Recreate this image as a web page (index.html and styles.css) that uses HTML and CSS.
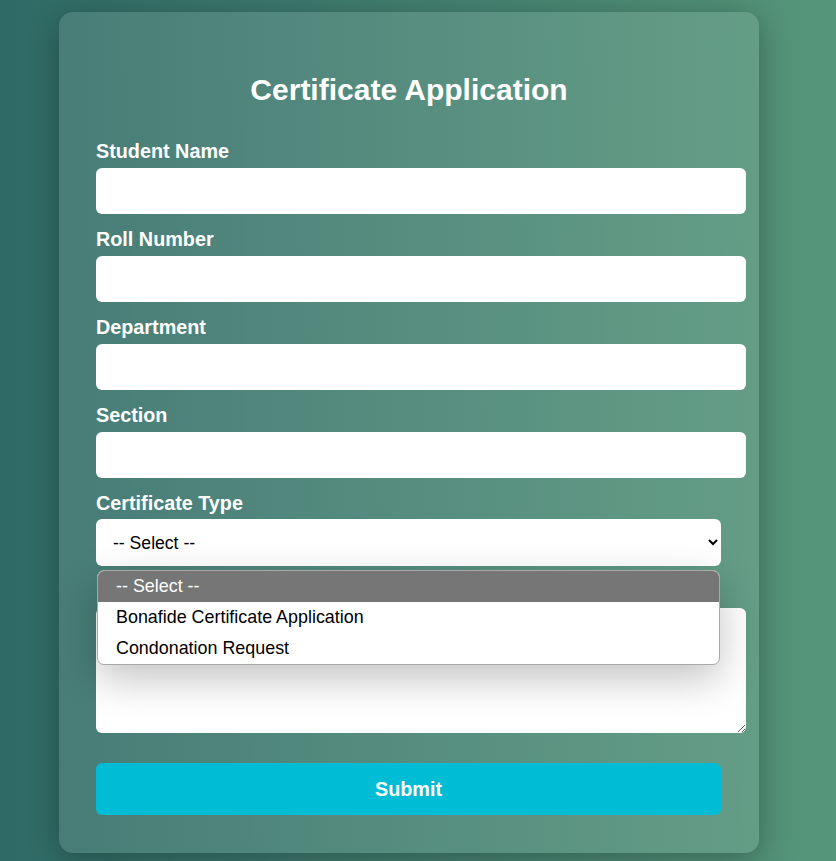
FILE: index.html
```html
<!DOCTYPE html>
<html lang="en">
<head>
<meta charset="utf-8">
<title>Certificate Application</title>
<link rel="stylesheet" href="styles.css">
</head>
<body>
<div class="card">
  <h2 class="title">Certificate Application</h2>
  <form class="form">
    <div class="field">
      <label class="label">Student Name</label>
      <input class="input" type="text">
    </div>
    <div class="field">
      <label class="label">Roll Number</label>
      <input class="input" type="text">
    </div>
    <div class="field">
      <label class="label">Department</label>
      <input class="input" type="text">
    </div>
    <div class="field">
      <label class="label">Section</label>
      <input class="input" type="text">
    </div>
    <div class="field select-field">
      <label class="label">Certificate Type</label>
      <select class="select">
        <option>-- Select --</option>
        <option>Bonafide Certificate Application</option>
        <option>Condonation Request</option>
      </select>
      <div class="popup">
        <div class="opt opt-active">-- Select --</div>
        <div class="opt">Bonafide Certificate Application</div>
        <div class="opt">Condonation Request</div>
      </div>
    </div>
    <div class="field">
      <span class="label label-covered"></span>
      <textarea class="textarea" aria-label="Reason"></textarea>
    </div>
    <button class="submit" type="button">Submit</button>
  </form>
</div>
</body>
</html>
```
FILE: styles.css
```css
html {
  height: 100%;
  background: linear-gradient(90deg, #2f6a66 0%, #56967a 100%);
}
body {
  margin: 0;
  padding: 12px 0 8px;
  font-family: "Liberation Sans", Arial, sans-serif;
}
.card {
  width: 700px;
  box-sizing: border-box;
  margin-left: 59px;
  padding: 61px 37px 38px;
  border-radius: 14px;
  background: linear-gradient(135deg, rgba(255,255,255,0.11), rgba(255,255,255,0.1));
  box-shadow: 0 6px 30px rgba(0, 0, 0, 0.3);
}
.title {
  margin: 0 0 33px;
  font-size: 30px;
  line-height: 34px;
  font-weight: bold;
  color: #fff;
  text-align: center;
}
.form {
  display: flex;
  flex-direction: column;
}
.field {
  display: flex;
  flex-direction: column;
  margin-bottom: 14px;
}
.label {
  display: block;
  font-size: 19.8px;
  line-height: 22px;
  font-weight: bold;
  color: #fff;
  margin-bottom: 6px;
}
.label-covered {
  height: 22px;
}
.input {
  width: 650px;
  height: 46px;
  box-sizing: border-box;
  border: none;
  border-radius: 6px;
  background: #fff;
  padding: 0 12px;
  font-size: 17.6px;
  font-family: "Liberation Sans", Arial, sans-serif;
}
.select-field {
  position: relative;
}
.select {
  width: 625px;
  height: 47px;
  box-sizing: border-box;
  border: none;
  border-radius: 6px;
  background: #fff;
  padding: 0 8px 0 13px;
  font-size: 17.6px;
  font-family: "Liberation Sans", Arial, sans-serif;
  color: #000;
  margin-top: -1px;
}
.popup {
  position: absolute;
  left: 1px;
  top: 78px;
  width: 623px;
  box-sizing: border-box;
  background: #fff;
  border: 1px solid #a9a9a9;
  border-radius: 7px;
  overflow: hidden;
  box-shadow: 0 14px 40px rgba(0, 0, 0, 0.24);
  z-index: 5;
}
.opt {
  height: 31px;
  line-height: 30px;
  padding-left: 18px;
  font-size: 17.9px;
  color: #000;
}
.opt-active {
  background: #767676;
  color: #fff;
}
.textarea {
  width: 650px;
  height: 125px;
  box-sizing: border-box;
  border: none;
  border-radius: 6px;
  background: #fff;
  padding: 12px;
  font-size: 17.6px;
  font-family: "Liberation Sans", Arial, sans-serif;
  display: block;
}
.submit {
  width: 625px;
  height: 52px;
  margin-top: 16px;
  border: none;
  border-radius: 6px;
  background: #00bcd4;
  color: #fff;
  font-size: 19.8px;
  font-weight: bold;
  font-family: "Liberation Sans", Arial, sans-serif;
}
```
